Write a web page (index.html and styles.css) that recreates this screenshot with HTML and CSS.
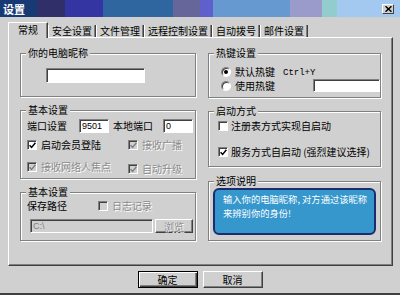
FILE: index.html
```html
<!DOCTYPE html>
<html lang="zh-CN">
<head>
    <meta charset="UTF-8">
    <title>设置</title>
    <link rel="stylesheet" href="styles.css">
</head>
<body>
    <div class="window">
        <div class="titlebar">
            <span class="title">设置</span>
            <span class="close">
                <svg width="7" height="6" viewBox="0 0 7 6"><path d="M0.5 0.3 L6.5 5.7 M6.5 0.3 L0.5 5.7" stroke="#000" stroke-width="1.5"/></svg>
            </span>
        </div>

        <div class="tabs">
            <div class="tab active">常规</div>
            <div class="tab">安全设置</div>
            <div class="tab">文件管理</div>
            <div class="tab">远程控制设置</div>
            <div class="tab">自动拨号</div>
            <div class="tab">邮件设置</div>
        </div>

        <div class="panel">
            <!-- left column -->
            <div class="col">
                <div class="group g-nick">
                    <span class="group-title">你的电脑昵称</span>
                    <input class="field nick" type="text" value="">
                </div>

                <div class="group g-basic">
                    <span class="group-title">基本设置</span>
                    <div class="row">
                        <span>端口设置</span>
                        <input class="field port" type="text" value="9501">
                        <span class="local-label">本地端口</span>
                        <input class="field local" type="text" value="0">
                    </div>
                    <div class="opts">
                        <label class="check"><span class="box"><svg width="7" height="7" viewBox="0 0 7 7"><path d="M0.6 3.2 L2.6 5.4 L6.4 0.8" fill="none" stroke="currentColor" stroke-width="1.5"/></svg></span>启动会员登陆</label>
                        <label class="check disabled"><span class="box"><svg width="7" height="7" viewBox="0 0 7 7"><path d="M0.6 3.2 L2.6 5.4 L6.4 0.8" fill="none" stroke="currentColor" stroke-width="1.5"/></svg></span>接收广播</label>
                        <label class="check disabled"><span class="box"><svg width="7" height="7" viewBox="0 0 7 7"><path d="M0.6 3.2 L2.6 5.4 L6.4 0.8" fill="none" stroke="currentColor" stroke-width="1.5"/></svg></span>接收网络人焦点</label>
                        <label class="check disabled lower"><span class="box"><svg width="7" height="7" viewBox="0 0 7 7"><path d="M0.6 3.2 L2.6 5.4 L6.4 0.8" fill="none" stroke="currentColor" stroke-width="1.5"/></svg></span>自动升级</label>
                    </div>
                </div>

                <div class="group g-save">
                    <span class="group-title">基本设置</span>
                    <div class="row">
                        <span>保存路径</span>
                        <label class="check disabled log"><span class="box"></span>日志记录</label>
                    </div>
                    <div class="row path-row">
                        <input class="field path" type="text" value="C:\" disabled>
                        <button class="mini-btn" disabled>浏览</button>
                    </div>
                </div>
            </div>

            <!-- right column -->
            <div class="col">
                <div class="group g-hotkey">
                    <span class="group-title">热键设置</span>
                    <label class="check"><span class="radio on"></span>默认热键<span class="mono">Ctrl+Y</span></label>
                    <div class="row hotkey-row">
                        <label class="check"><span class="radio"></span>使用热键</label>
                        <input class="field hotkey" type="text" value="">
                    </div>
                </div>

                <div class="group g-start">
                    <span class="group-title">启动方式</span>
                    <label class="check"><span class="box"></span>注册表方式实现自启动</label>
                    <label class="check service"><span class="box"><svg width="7" height="7" viewBox="0 0 7 7"><path d="M0.6 3.2 L2.6 5.4 L6.4 0.8" fill="none" stroke="currentColor" stroke-width="1.5"/></svg></span>服务方式自启动 (强烈建议选择)</label>
                </div>

                <div class="group g-desc">
                    <span class="group-title">选项说明</span>
                    <div class="note">
                        <div>输入你的电脑昵称, 对方通过该昵称</div>
                        <div>来辨别你的身份!</div>
                    </div>
                </div>
            </div>
        </div>

        <div class="footer">
            <button class="btn default">确定</button>
            <button class="btn">取消</button>
        </div>
    </div>
</body>
</html>
```

FILE: styles.css
```css
body {
    margin: 0;
    background-color: #d0d0d0;
    font-family: "Noto Sans CJK SC", "Noto Sans", sans-serif;
    font-size: 10px;
    line-height: 12px;
    color: #000;
}
.window {
    width: 400px;
    height: 295px;
    box-sizing: border-box;
    border-bottom: 2px solid #404040;
    display: flex;
    flex-direction: column;
    overflow: hidden;
}

/* title bar */
.titlebar {
    height: 17px;
    flex: none;
    display: flex;
    align-items: center;
    padding: 0 6px 0 3px;
    color: #fff;
    font-size: 11px;
    font-weight: bold;
    background: linear-gradient(to right,
        #183a74 0 37px, #302f6a 37px 65px, #3434a2 65px 103px,
        #2f66a0 103px 173px, #66669a 173px 200px, #6060cc 200px 213px,
        #6699cf 213px 290px, #9a9acb 290px 322px, #93cccc 322px 337px,
        #a3c9f0 337px);
}
.close {
    margin-left: auto;
    width: 12px;
    height: 10px;
    box-sizing: border-box;
    background-color: #d0d0d0;
    border: 1px solid;
    border-color: #fff #404040 #404040 #fff;
    display: flex;
    align-items: center;
    justify-content: center;
}

/* tabs */
.tabs {
    height: 20px;
    flex: none;
    display: flex;
    align-items: flex-end;
    padding-left: 8px;
}
.tab {
    height: 12px;
    line-height: 12px;
    padding: 0 3px;
    border-left: 1px solid #fff;
    border-right: 1px solid #404040;
    box-shadow: inset -1px 0 0 #808080;
}
.tab.active {
    position: relative;
    height: 16px;
    box-sizing: border-box;
    line-height: 14px;
    padding: 0 9px;
    border-top: 1px solid #fff;
    margin-bottom: -1px;
    background-color: #d0d0d0;
}

/* panel */
.panel {
    margin-left: 8px;
    width: 385px;
    height: 229px;
    flex: none;
    box-sizing: border-box;
    border-top: 1px solid #fff;
    border-left: 1px solid #fff;
    border-right: 1px solid #404040;
    border-bottom: 1px solid #404040;
    box-shadow: inset -1px -1px 0 #808080;
    padding: 15px 0 0 11px;
    display: grid;
    grid-template-columns: 176px 173px;
    column-gap: 12px;
    align-items: start;
}
.col {
    display: flex;
    flex-direction: column;
    gap: 13px;
}
.group {
    position: relative;
    box-sizing: border-box;
    border: 1px solid #808080;
    box-shadow: inset 1px 1px 0 #fff, 1px 1px 0 #fff;
}
.group-title {
    position: absolute;
    top: -7px;
    left: 5px;
    padding: 0 2px;
    line-height: 12px;
    background-color: #d0d0d0;
}
.row {
    display: flex;
    align-items: center;
}

/* controls */
.field {
    box-sizing: border-box;
    height: 14px;
    margin: 0;
    padding: 0 2px;
    border: 1px solid;
    border-color: #808080 #fff #fff #808080;
    box-shadow: inset 1px 1px 0 #404040;
    background-color: #fff;
    font: 9px "Liberation Sans", sans-serif;
    color: #000;
    outline: none;
}
.field:disabled {
    background-color: #d0d0d0;
    color: #808080;
}
.check {
    display: flex;
    align-items: center;
    gap: 4px;
    line-height: 12px;
}
.check.disabled {
    color: #8c8c8c;
    text-shadow: 1px 1px 0 #fff;
}
.box {
    flex: none;
    width: 10px;
    height: 10px;
    box-sizing: border-box;
    border: 1px solid;
    border-color: #808080 #fff #fff #808080;
    box-shadow: inset 1px 1px 0 #404040;
    background-color: #fff;
    color: #000;
    display: flex;
    align-items: center;
    justify-content: center;
}
.check.disabled .box {
    background-color: #d0d0d0;
    color: #808080;
}
.radio {
    flex: none;
    width: 10px;
    height: 10px;
    box-sizing: border-box;
    border-radius: 50%;
    border: 1px solid;
    border-color: #808080 #fff #fff #808080;
    box-shadow: inset 1px 1px 0 #404040;
    background-color: #fff;
    display: flex;
    align-items: center;
    justify-content: center;
}
.radio.on::after {
    content: "";
    width: 4px;
    height: 4px;
    border-radius: 50%;
    background-color: #000;
}
.mono {
    font-family: "Liberation Mono", monospace;
    font-size: 9px;
    margin-left: 4px;
    position: relative;
    top: 1px;
}

/* left groups */
.g-nick {
    height: 44px;
    padding: 14px 0 0 25px;
}
.nick {
    width: 99px;
    height: 15px;
}
.g-basic {
    height: 69px;
    padding: 8px 0 0 6px;
}
.port {
    width: 30px;
    margin-left: 12px;
}
.local-label {
    margin-left: 4px;
}
.local {
    width: 30px;
    margin-left: 10px;
}
.opts {
    display: grid;
    grid-template-columns: 101px auto;
    row-gap: 8px;
    margin-top: 6px;
}
.lower {
    margin-top: 4px;
}
.g-save {
    height: 49px;
    padding: 7px 0 0 6px;
}
.log {
    margin-left: 31px;
}
.path-row {
    margin-top: 7px;
}
.path {
    width: 123px;
    margin-left: 3px;
}
.mini-btn {
    width: 38px;
    height: 14px;
    margin-left: 2px;
    padding: 0;
    box-sizing: border-box;
    background-color: #d0d0d0;
    border: 1px solid;
    border-color: #fff #404040 #404040 #fff;
    box-shadow: inset -1px -1px 0 #808080;
    font: 10px "Noto Sans CJK SC", sans-serif;
    line-height: 11px;
    color: #8c8c8c;
    text-shadow: 1px 1px 0 #fff;
}

/* right groups */
.g-hotkey {
    height: 45px;
    padding: 12px 0 0 12px;
}
.hotkey-row {
    margin-top: 1px;
}
.hotkey {
    width: 67px;
    height: 13px;
    margin-left: auto;
}
.g-start {
    height: 56px;
    padding: 8px 0 0 9px;
}
.g-start .check {
    gap: 3px;
}
.service {
    margin-top: 14px;
}
.g-desc {
    height: 60px;
    margin-top: 1px;
    padding: 6px 0 0 4px;
}
.note {
    width: 163px;
    height: 47px;
    box-sizing: border-box;
    border: 2px solid #1c2c6c;
    border-radius: 6px;
    background-color: #3697cd;
    color: #fff;
    padding: 3px 0 0 8px;
    font-size: 9.3px;
    line-height: 13.5px;
    white-space: nowrap;
}

/* buttons */
.footer {
    flex: 1;
    display: flex;
    justify-content: center;
    align-items: flex-start;
    gap: 5px;
    padding-top: 5px;
}
.btn {
    width: 60px;
    height: 17px;
    box-sizing: border-box;
    padding: 0;
    background-color: #d0d0d0;
    border: 1px solid;
    border-color: #fff #404040 #404040 #fff;
    box-shadow: inset -1px -1px 0 #808080;
    font: 10px "Noto Sans CJK SC", sans-serif;
    line-height: 13px;
    color: #000;
}
.btn.default {
    border: 1px solid #000;
    box-shadow: inset 1px 1px 0 #fff, inset -1px -1px 0 #404040, inset -2px -2px 0 #808080;
}
```
